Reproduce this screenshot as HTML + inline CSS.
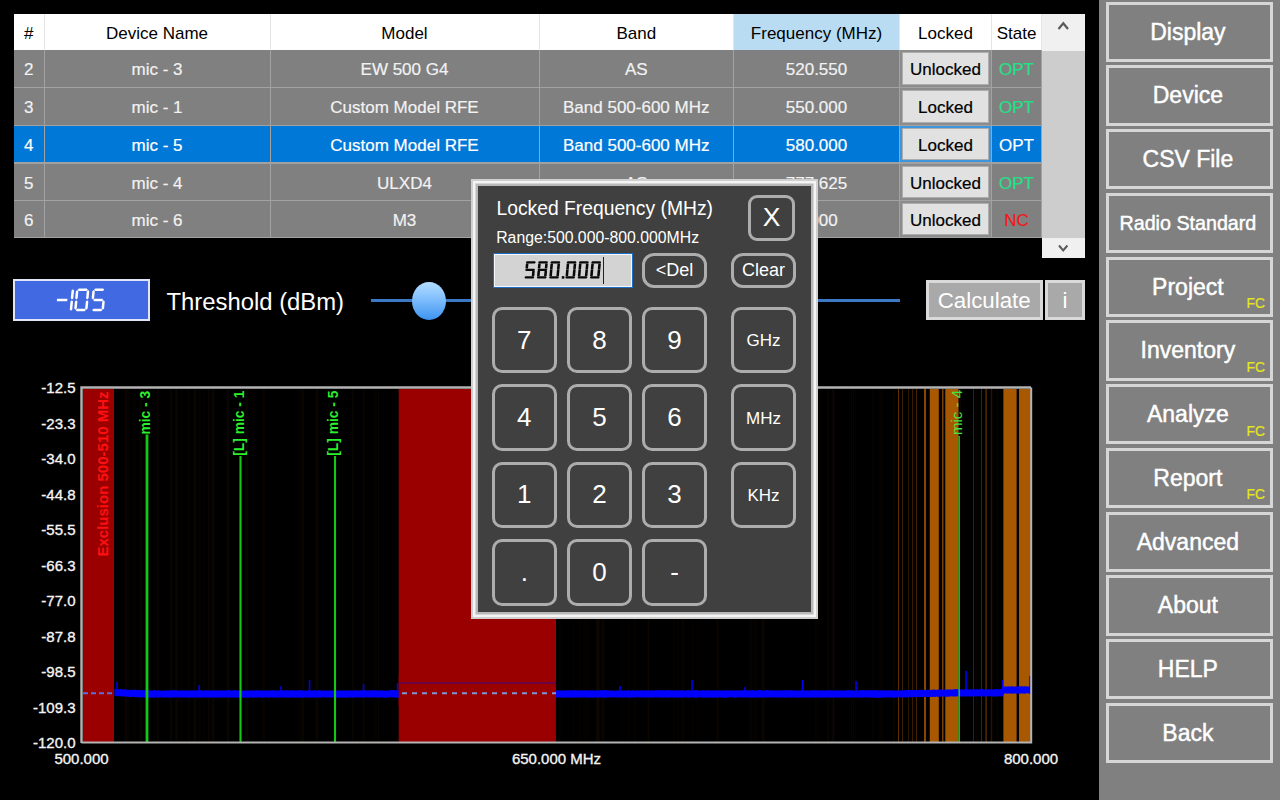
<!DOCTYPE html>
<html><head><meta charset="utf-8"><title>RF</title>
<style>
*{box-sizing:border-box;margin:0;padding:0}
html,body{width:1280px;height:800px;overflow:hidden;background:#000;font-family:"Liberation Sans",sans-serif}
#root{position:relative;width:1280px;height:800px;background:#000;overflow:hidden}
#tbl{position:absolute;left:14px;top:14px;width:1028px;height:224px;background:#a0a0a0;font-size:17px}
.hc{position:absolute;top:0;height:36.3px;line-height:40.5px;text-align:center;background:#fff;color:#000;border-right:1px solid #e5e5e5;white-space:nowrap}
.hc.hsel{background:#b9dcf3}
.row{position:absolute;left:0;width:1028px}
.c{position:absolute;top:0;height:100%;background:#808080;color:#f2f2f2;text-align:center;-webkit-text-stroke:0.2px;line-height:40.5px;border-right:1px solid #a2a2a2;border-bottom:1px solid #a2a2a2;white-space:nowrap;overflow:hidden}
.row.sel .c{background:#0078d7;color:#fff}
.c.opt{color:#1fe286} .c.nc{color:#f01818}
.row.sel .c.opt{color:#fff}
.c.lockc{background:#8c8c8c}
.row.sel .c.lockc{background:#3f94dc}
.lbtn{position:absolute;left:2px;top:2px;right:2px;bottom:2px;background:#e1e1e1;border:1px solid #adadad;color:#000;line-height:33px}
#sbar{position:absolute;left:1042px;top:14px;width:43px;height:244px;background:#f0f0f0}
#sthumb{position:absolute;left:0;top:36.5px;width:43px;height:187px;background:#cdcdcd}
#side{position:absolute;left:1098.5px;top:0;width:182px;height:800px;background:#808080}
.sbtn{-webkit-text-stroke:0.45px #fff;position:absolute;left:7.8px;width:167.2px;padding-right:4px;height:60.3px;border:3px solid #d6d6d6;color:#fff;font-size:23px;text-align:center;line-height:55px;white-space:nowrap}
.sbtn.small{font-size:19.7px}
.fc{-webkit-text-stroke:0.2px #e6e61a;position:absolute;right:5.5px;bottom:3px;font-size:13.8px;color:#e6e61a;line-height:1}
#thr{position:absolute;left:13px;top:279px;width:136.5px;height:41.5px;background:#4169e1;border:2px solid #dfe6f7}
#thrl{position:absolute;left:166.5px;top:287.6px;color:#fff;font-size:23.85px;line-height:28px;white-space:nowrap}
#sline{position:absolute;left:371px;top:299.2px;width:529px;height:2.4px;background:#3b79c4}
#sknob{position:absolute;left:411.8px;top:281.8px;width:34.4px;height:38.6px;border-radius:50%;background:linear-gradient(#b4dcff 0%,#8cc6ff 35%,#3d94f0 100%)}
.gbtn{position:absolute;top:280.3px;height:39.6px;background:#a9a9a9;border:3px solid #d9d9d9;color:#fff;font-size:22.3px;text-align:center;line-height:36.5px}
#dlg{position:absolute;left:470.5px;top:179px;width:347.6px;height:440.2px;background:#404040;border:2px solid #cfcfcf;box-shadow:inset 0 0 0 2.5px #f4f4f4, inset 0 0 0 5px #b9b9b9}
.kb{position:absolute;border:3px solid #adadad;border-radius:10px;color:#fff;font-size:26px;text-align:center;display:flex;align-items:center;justify-content:center;background:#404040}
.kb.unit{font-size:17px;padding-top:2.5px}
.kb.xb{font-size:26.5px;border-radius:9px}
.kb.sm{font-size:18px;border-radius:12px}
#dt{position:absolute;left:496.5px;top:197.3px;color:#fff;font-size:19.3px;line-height:24px;white-space:nowrap}
#dr{position:absolute;left:496.2px;top:227.6px;color:#fff;font-size:15.8px;line-height:20px;white-space:nowrap}
#inp{position:absolute;left:492.8px;top:253px;width:140.6px;height:35px;background:#d3d3d3;border:1.5px solid #1c6fc2;box-shadow:inset 0 0 0 1px #f4f8fc}
#caret{position:absolute;left:602.5px;top:256.5px;width:1.3px;height:27px;background:#222}
.gl{font:bold 13.8px "Liberation Sans",sans-serif;fill:#2cf02c}
.gl2{font:15px "Liberation Sans",sans-serif;fill:#3fe83f}
.rl{font:bold 15px "Liberation Sans",sans-serif;fill:#ff1010}
.yl{font:15px "Liberation Sans",sans-serif;fill:#f4f4f4;stroke:#f4f4f4;stroke-width:0.35px}
</style></head><body><div id="root">
<svg id="chart" width="1098" height="800" viewBox="0 0 1098 800" style="position:absolute;left:0;top:0">
<rect x="411.0" y="389" width="1" height="353" fill="rgba(150,80,0,0.027)"/>
<rect x="180.4" y="389" width="2" height="353" fill="rgba(150,80,0,0.044)"/>
<rect x="648.4" y="389" width="1" height="353" fill="rgba(150,80,0,0.061)"/>
<rect x="148.4" y="389" width="1" height="353" fill="rgba(150,80,0,0.040)"/>
<rect x="334.7" y="389" width="1" height="353" fill="rgba(150,80,0,0.045)"/>
<rect x="872.2" y="389" width="1" height="353" fill="rgba(150,80,0,0.026)"/>
<rect x="692.3" y="389" width="1" height="353" fill="rgba(150,80,0,0.046)"/>
<rect x="643.2" y="389" width="1" height="353" fill="rgba(150,80,0,0.038)"/>
<rect x="156.7" y="389" width="2" height="353" fill="rgba(150,80,0,0.059)"/>
<rect x="498.4" y="389" width="2" height="353" fill="rgba(150,80,0,0.044)"/>
<rect x="627.8" y="389" width="1" height="353" fill="rgba(150,80,0,0.051)"/>
<rect x="647.3" y="389" width="2" height="353" fill="rgba(150,80,0,0.049)"/>
<rect x="203.3" y="389" width="1" height="353" fill="rgba(150,80,0,0.052)"/>
<rect x="681.6" y="389" width="3" height="353" fill="rgba(150,80,0,0.042)"/>
<rect x="826.7" y="389" width="3" height="353" fill="rgba(150,80,0,0.041)"/>
<rect x="445.6" y="389" width="1" height="353" fill="rgba(150,80,0,0.031)"/>
<rect x="755.0" y="389" width="2" height="353" fill="rgba(150,80,0,0.031)"/>
<rect x="595.6" y="389" width="3" height="353" fill="rgba(150,80,0,0.059)"/>
<rect x="378.0" y="389" width="1" height="353" fill="rgba(150,80,0,0.064)"/>
<rect x="583.4" y="389" width="2" height="353" fill="rgba(150,80,0,0.027)"/>
<rect x="253.4" y="389" width="1" height="353" fill="rgba(150,80,0,0.042)"/>
<rect x="996.2" y="389" width="2" height="353" fill="rgba(150,80,0,0.023)"/>
<rect x="425.9" y="389" width="3" height="353" fill="rgba(150,80,0,0.036)"/>
<rect x="645.8" y="389" width="1" height="353" fill="rgba(150,80,0,0.041)"/>
<rect x="980.3" y="389" width="1" height="353" fill="rgba(150,80,0,0.041)"/>
<rect x="169.6" y="389" width="3" height="353" fill="rgba(150,80,0,0.052)"/>
<rect x="375.0" y="389" width="2" height="353" fill="rgba(150,80,0,0.037)"/>
<rect x="134.7" y="389" width="1" height="353" fill="rgba(150,80,0,0.041)"/>
<rect x="674.2" y="389" width="1" height="353" fill="rgba(150,80,0,0.042)"/>
<rect x="818.5" y="389" width="1" height="353" fill="rgba(150,80,0,0.026)"/>
<rect x="478.9" y="389" width="3" height="353" fill="rgba(150,80,0,0.061)"/>
<rect x="187.9" y="389" width="2" height="353" fill="rgba(150,80,0,0.040)"/>
<rect x="924.1" y="389" width="2" height="353" fill="rgba(150,80,0,0.057)"/>
<rect x="761.8" y="389" width="3" height="353" fill="rgba(150,80,0,0.064)"/>
<rect x="992.2" y="389" width="1" height="353" fill="rgba(150,80,0,0.027)"/>
<rect x="252.7" y="389" width="1" height="353" fill="rgba(150,80,0,0.050)"/>
<rect x="558.7" y="389" width="2" height="353" fill="rgba(150,80,0,0.047)"/>
<rect x="372.5" y="389" width="2" height="353" fill="rgba(150,80,0,0.027)"/>
<rect x="673.2" y="389" width="1" height="353" fill="rgba(150,80,0,0.034)"/>
<rect x="747.2" y="389" width="1" height="353" fill="rgba(150,80,0,0.043)"/>
<rect x="532.7" y="389" width="3" height="353" fill="rgba(150,80,0,0.059)"/>
<rect x="479.0" y="389" width="3" height="353" fill="rgba(150,80,0,0.038)"/>
<rect x="695.6" y="389" width="1" height="353" fill="rgba(150,80,0,0.023)"/>
<rect x="1016.9" y="389" width="1" height="353" fill="rgba(150,80,0,0.040)"/>
<rect x="425.8" y="389" width="1" height="353" fill="rgba(150,80,0,0.022)"/>
<rect x="633.7" y="389" width="2" height="353" fill="rgba(150,80,0,0.044)"/>
<rect x="676.8" y="389" width="1" height="353" fill="rgba(150,80,0,0.023)"/>
<rect x="677.1" y="389" width="2" height="353" fill="rgba(150,80,0,0.027)"/>
<rect x="990.2" y="389" width="3" height="353" fill="rgba(150,80,0,0.047)"/>
<rect x="226.6" y="389" width="3" height="353" fill="rgba(150,80,0,0.058)"/>
<rect x="554.5" y="389" width="1" height="353" fill="rgba(150,80,0,0.034)"/>
<rect x="207.7" y="389" width="2" height="353" fill="rgba(150,80,0,0.035)"/>
<rect x="552.9" y="389" width="1" height="353" fill="rgba(150,80,0,0.051)"/>
<rect x="302.2" y="389" width="2" height="353" fill="rgba(150,80,0,0.063)"/>
<rect x="248.4" y="389" width="1" height="353" fill="rgba(150,80,0,0.044)"/>
<rect x="809.2" y="389" width="1" height="353" fill="rgba(150,80,0,0.033)"/>
<rect x="752.4" y="389" width="2" height="353" fill="rgba(150,80,0,0.032)"/>
<rect x="946.9" y="389" width="1" height="353" fill="rgba(150,80,0,0.036)"/>
<rect x="602.4" y="389" width="2" height="353" fill="rgba(150,80,0,0.055)"/>
<rect x="697.6" y="389" width="1" height="353" fill="rgba(150,80,0,0.048)"/>
<rect x="853.2" y="389" width="1" height="353" fill="rgba(150,80,0,0.057)"/>
<rect x="297.3" y="389" width="1" height="353" fill="rgba(150,80,0,0.042)"/>
<rect x="1021.5" y="389" width="3" height="353" fill="rgba(150,80,0,0.056)"/>
<rect x="351.7" y="389" width="2" height="353" fill="rgba(150,80,0,0.051)"/>
<rect x="524.1" y="389" width="2" height="353" fill="rgba(150,80,0,0.062)"/>
<rect x="989.7" y="389" width="1" height="353" fill="rgba(150,80,0,0.036)"/>
<rect x="207.7" y="389" width="2" height="353" fill="rgba(150,80,0,0.041)"/>
<rect x="301.4" y="389" width="1" height="353" fill="rgba(150,80,0,0.048)"/>
<rect x="553.7" y="389" width="1" height="353" fill="rgba(150,80,0,0.049)"/>
<rect x="879.4" y="389" width="3" height="353" fill="rgba(150,80,0,0.025)"/>
<rect x="831.4" y="389" width="3" height="353" fill="rgba(150,80,0,0.054)"/>
<rect x="929.2" y="389" width="2" height="353" fill="rgba(150,80,0,0.040)"/>
<rect x="193.5" y="389" width="3" height="353" fill="rgba(150,80,0,0.063)"/>
<rect x="538.7" y="389" width="1" height="353" fill="rgba(150,80,0,0.053)"/>
<rect x="778.6" y="389" width="1" height="353" fill="rgba(150,80,0,0.028)"/>
<rect x="139.3" y="389" width="3" height="353" fill="rgba(150,80,0,0.047)"/>
<rect x="853.6" y="389" width="3" height="353" fill="rgba(150,80,0,0.027)"/>
<rect x="716.7" y="389" width="1" height="353" fill="rgba(150,80,0,0.036)"/>
<rect x="133.6" y="389" width="1" height="353" fill="rgba(150,80,0,0.056)"/>
<rect x="596.9" y="389" width="3" height="353" fill="rgba(150,80,0,0.062)"/>
<rect x="1018.7" y="389" width="1" height="353" fill="rgba(150,80,0,0.029)"/>
<rect x="139.7" y="389" width="1" height="353" fill="rgba(150,80,0,0.030)"/>
<rect x="814.3" y="389" width="3" height="353" fill="rgba(150,80,0,0.035)"/>
<rect x="879.0" y="389" width="2" height="353" fill="rgba(150,80,0,0.023)"/>
<rect x="937.2" y="389" width="3" height="353" fill="rgba(150,80,0,0.050)"/>
<rect x="872.5" y="389" width="1" height="353" fill="rgba(150,80,0,0.060)"/>
<rect x="601.7" y="389" width="1" height="353" fill="rgba(150,80,0,0.044)"/>
<rect x="914.4" y="389" width="1" height="353" fill="rgba(150,80,0,0.055)"/>
<rect x="825.6" y="389" width="1" height="353" fill="rgba(150,80,0,0.027)"/>
<rect x="548.2" y="389" width="1" height="353" fill="rgba(150,80,0,0.053)"/>
<rect x="412.9" y="389" width="3" height="353" fill="rgba(150,80,0,0.043)"/>
<rect x="833.2" y="389" width="1" height="353" fill="rgba(150,80,0,0.025)"/>
<rect x="341.9" y="389" width="1" height="353" fill="rgba(150,80,0,0.032)"/>
<rect x="579.6" y="389" width="1" height="353" fill="rgba(150,80,0,0.045)"/>
<rect x="520.5" y="389" width="1" height="353" fill="rgba(150,80,0,0.048)"/>
<rect x="749.2" y="389" width="3" height="353" fill="rgba(150,80,0,0.040)"/>
<rect x="579.6" y="389" width="2" height="353" fill="rgba(150,80,0,0.031)"/>
<rect x="960.2" y="389" width="1" height="353" fill="rgba(150,80,0,0.060)"/>
<rect x="884.3" y="389" width="1" height="353" fill="rgba(150,80,0,0.026)"/>
<rect x="473.8" y="389" width="1" height="353" fill="rgba(150,80,0,0.034)"/>
<rect x="506.8" y="389" width="2" height="353" fill="rgba(150,80,0,0.030)"/>
<rect x="832.9" y="389" width="1" height="353" fill="rgba(150,80,0,0.060)"/>
<rect x="975.5" y="389" width="2" height="353" fill="rgba(150,80,0,0.049)"/>
<rect x="245.1" y="389" width="3" height="353" fill="rgba(150,80,0,0.060)"/>
<rect x="315.4" y="389" width="3" height="353" fill="rgba(150,80,0,0.063)"/>
<rect x="925.5" y="389" width="1" height="353" fill="rgba(150,80,0,0.027)"/>
<rect x="262.1" y="389" width="3" height="353" fill="rgba(150,80,0,0.039)"/>
<rect x="425.0" y="389" width="2" height="353" fill="rgba(150,80,0,0.029)"/>
<rect x="198.5" y="389" width="2" height="353" fill="rgba(150,80,0,0.036)"/>
<rect x="622.1" y="389" width="1" height="353" fill="rgba(150,80,0,0.040)"/>
<rect x="466.4" y="389" width="2" height="353" fill="rgba(150,80,0,0.043)"/>
<rect x="583.7" y="389" width="1" height="353" fill="rgba(150,80,0,0.023)"/>
<rect x="1005.0" y="389" width="2" height="353" fill="rgba(150,80,0,0.025)"/>
<rect x="363.4" y="389" width="1" height="353" fill="rgba(150,80,0,0.061)"/>
<rect x="362.0" y="389" width="3" height="353" fill="rgba(150,80,0,0.026)"/>
<rect x="893.1" y="389" width="2" height="353" fill="rgba(150,80,0,0.050)"/>
<rect x="486.3" y="389" width="3" height="353" fill="rgba(150,80,0,0.044)"/>
<rect x="756.3" y="389" width="1" height="353" fill="rgba(150,80,0,0.024)"/>
<rect x="847.2" y="389" width="1" height="353" fill="rgba(150,80,0,0.028)"/>
<rect x="360.6" y="389" width="1" height="353" fill="rgba(150,80,0,0.021)"/>
<rect x="849.1" y="389" width="1" height="353" fill="rgba(150,80,0,0.024)"/>
<rect x="175.1" y="389" width="3" height="353" fill="rgba(150,80,0,0.059)"/>
<rect x="124.6" y="389" width="3" height="353" fill="rgba(150,80,0,0.065)"/>
<rect x="963.8" y="389" width="1" height="353" fill="rgba(150,80,0,0.032)"/>
<rect x="153.6" y="389" width="1" height="353" fill="rgba(150,80,0,0.052)"/>
<rect x="1002.8" y="389" width="1" height="353" fill="rgba(150,80,0,0.032)"/>
<rect x="299.0" y="389" width="2" height="353" fill="rgba(150,80,0,0.034)"/>
<rect x="601.0" y="389" width="3" height="353" fill="rgba(150,80,0,0.029)"/>
<rect x="572.6" y="389" width="2" height="353" fill="rgba(150,80,0,0.028)"/>
<rect x="851.0" y="389" width="1" height="353" fill="rgba(150,80,0,0.065)"/>
<rect x="128.1" y="389" width="1" height="353" fill="rgba(150,80,0,0.053)"/>
<rect x="585.6" y="389" width="3" height="353" fill="rgba(150,80,0,0.031)"/>
<rect x="211.5" y="389" width="3" height="353" fill="rgba(150,80,0,0.057)"/>
<rect x="716.0" y="389" width="3" height="353" fill="rgba(150,80,0,0.045)"/>
<rect x="1003.8" y="389" width="1" height="353" fill="rgba(150,80,0,0.034)"/>
<rect x="1014.9" y="389" width="1" height="353" fill="rgba(150,80,0,0.035)"/>
<rect x="485.1" y="389" width="1" height="353" fill="rgba(150,80,0,0.036)"/>
<rect x="881.5" y="389" width="2" height="353" fill="rgba(150,80,0,0.021)"/>
<rect x="509.0" y="389" width="3" height="353" fill="rgba(150,80,0,0.022)"/>
<rect x="912.3" y="389" width="2" height="353" fill="rgba(150,80,0,0.050)"/>
<rect x="83" y="389" width="31" height="353" fill="#9b0000"/>
<rect x="398.7" y="389" width="157.3" height="353" fill="#9b0000"/>
<rect x="898" y="389" width="1" height="353" fill="#a85800" opacity="0.55"/>
<rect x="902" y="389" width="1" height="353" fill="#a85800" opacity="0.35"/>
<rect x="908" y="389" width="1" height="353" fill="#a85800" opacity="0.25"/>
<rect x="912" y="389" width="1" height="353" fill="#a85800" opacity="0.3"/>
<rect x="916" y="389" width="1" height="353" fill="#a85800" opacity="0.4"/>
<rect x="924" y="389" width="2" height="353" fill="#a85800" opacity="0.8"/>
<rect x="929.8" y="389" width="9" height="353" fill="#a85800" opacity="1"/>
<rect x="942" y="389" width="1.5" height="353" fill="#a85800" opacity="0.7"/>
<rect x="945.3" y="389" width="13.2" height="353" fill="#a85800" opacity="1"/>
<rect x="973" y="389" width="1" height="353" fill="#a85800" opacity="0.35"/>
<rect x="981" y="389" width="1" height="353" fill="#a85800" opacity="0.4"/>
<rect x="985.5" y="389" width="1.2" height="353" fill="#a85800" opacity="0.6"/>
<rect x="991" y="389" width="1" height="353" fill="#a85800" opacity="0.2"/>
<rect x="1003.4" y="389" width="13.2" height="353" fill="#a85800" opacity="1"/>
<rect x="1019" y="389" width="12" height="353" fill="#a85800" opacity="1"/>
<path d="M114.5,688.9 L116.0,689.3 L117.5,689.2 L119.0,689.2 L120.5,688.9 L122.0,689.6 L123.5,689.5 L125.0,689.5 L126.5,689.6 L128.0,689.7 L129.5,689.9 L131.0,689.9 L132.5,689.8 L134.0,689.8 L135.5,689.6 L137.0,690.2 L138.5,689.9 L140.0,690.0 L141.5,690.2 L143.0,690.2 L144.5,690.1 L146.0,690.4 L147.5,690.3 L149.0,690.2 L150.5,690.4 L152.0,690.7 L153.5,690.2 L155.0,690.1 L156.5,690.6 L158.0,690.3 L159.5,690.5 L161.0,690.7 L162.5,690.4 L164.0,690.5 L165.5,690.7 L167.0,690.2 L168.5,690.4 L170.0,690.4 L171.5,690.2 L173.0,690.2 L174.5,690.3 L176.0,690.2 L177.5,690.2 L179.0,690.7 L180.5,690.6 L182.0,690.5 L183.5,690.3 L185.0,690.6 L186.5,690.4 L188.0,690.6 L189.5,690.4 L191.0,690.5 L192.5,690.2 L194.0,690.4 L195.5,690.6 L197.0,690.5 L198.5,690.4 L200.0,690.1 L201.5,690.2 L203.0,690.7 L204.5,690.3 L206.0,690.5 L207.5,690.3 L209.0,690.6 L210.5,690.4 L212.0,690.5 L213.5,690.1 L215.0,690.5 L216.5,690.5 L218.0,690.6 L219.5,690.5 L221.0,690.5 L222.5,690.6 L224.0,690.3 L225.5,690.7 L227.0,690.2 L228.5,690.1 L230.0,690.2 L231.5,690.7 L233.0,690.3 L234.5,690.1 L236.0,690.5 L237.5,690.2 L239.0,690.7 L240.5,690.5 L242.0,690.4 L243.5,690.7 L245.0,690.5 L246.5,690.6 L248.0,690.4 L249.5,690.4 L251.0,690.5 L252.5,690.5 L254.0,690.3 L255.5,690.6 L257.0,690.3 L258.5,690.3 L260.0,690.4 L261.5,690.4 L263.0,690.5 L264.5,690.4 L266.0,690.6 L267.5,690.4 L269.0,690.5 L270.5,690.6 L272.0,690.2 L273.5,690.3 L275.0,690.5 L276.5,690.4 L278.0,690.5 L279.5,690.4 L281.0,690.2 L282.5,690.2 L284.0,690.3 L285.5,690.5 L287.0,690.1 L288.5,690.4 L290.0,690.2 L291.5,690.4 L293.0,690.1 L294.5,690.4 L296.0,690.4 L297.5,690.6 L299.0,690.1 L300.5,690.2 L302.0,690.2 L303.5,690.6 L305.0,690.7 L306.5,690.4 L308.0,690.3 L309.5,690.3 L311.0,690.4 L312.5,690.6 L314.0,690.1 L315.5,690.5 L317.0,690.7 L318.5,690.1 L320.0,690.5 L321.5,690.6 L323.0,690.4 L324.5,690.5 L326.0,690.7 L327.5,690.2 L329.0,690.7 L330.5,690.4 L332.0,690.4 L333.5,690.3 L335.0,690.5 L336.5,690.5 L338.0,690.7 L339.5,690.6 L341.0,690.6 L342.5,690.5 L344.0,690.6 L345.5,690.3 L347.0,690.4 L348.5,690.7 L350.0,690.1 L351.5,690.7 L353.0,690.5 L354.5,690.6 L356.0,690.3 L357.5,690.6 L359.0,690.6 L360.5,690.3 L362.0,690.4 L363.5,690.3 L365.0,690.1 L366.5,690.6 L368.0,690.7 L369.5,690.2 L371.0,690.2 L372.5,690.2 L374.0,690.2 L375.5,690.3 L377.0,690.4 L378.5,690.5 L380.0,690.4 L381.5,690.6 L383.0,690.5 L384.5,690.4 L386.0,690.7 L387.5,690.7 L389.0,690.5 L390.5,690.1 L392.0,690.3 L393.5,690.1 L395.0,690.3 L396.5,690.2 L398.0,690.7 L399.5,690.6 L401.0,690.4 L402.5,690.2 L404.0,690.2 L405.5,690.4 L407.0,690.1 L408.5,690.3 L410.0,690.6 L411.5,690.4 L413.0,690.3 L414.5,690.5 L416.0,690.5 L417.5,690.4 L419.0,690.6 L420.5,690.6 L422.0,690.3 L423.5,690.4 L425.0,690.1 L426.5,690.6 L428.0,690.2 L429.5,690.4 L431.0,690.2 L432.5,690.5 L434.0,690.5 L435.5,690.5 L437.0,690.6 L438.5,690.5 L440.0,690.6 L441.5,690.5 L443.0,690.4 L444.5,690.6 L446.0,690.7 L447.5,690.2 L449.0,690.4 L450.5,690.2 L452.0,690.7 L453.5,690.2 L455.0,690.7 L456.5,690.6 L458.0,690.2 L459.5,690.7 L461.0,690.3 L462.5,690.7 L464.0,690.7 L465.5,690.7 L467.0,690.2 L468.5,690.2 L470.0,690.5 L471.5,690.7 L473.0,690.4 L474.5,690.5 L476.0,690.3 L477.5,690.4 L479.0,690.5 L480.5,690.1 L482.0,690.4 L483.5,690.3 L485.0,690.5 L486.5,690.2 L488.0,690.3 L489.5,690.5 L491.0,690.4 L492.5,690.6 L494.0,690.4 L495.5,690.2 L497.0,690.7 L498.5,690.2 L500.0,690.4 L501.5,690.3 L503.0,690.5 L504.5,690.6 L506.0,690.5 L507.5,690.2 L509.0,690.5 L510.5,690.7 L512.0,690.5 L513.5,690.3 L515.0,690.3 L516.5,690.2 L518.0,690.2 L519.5,690.3 L521.0,690.4 L522.5,690.7 L524.0,690.6 L525.5,690.6 L527.0,690.2 L528.5,690.2 L530.0,690.3 L531.5,690.5 L533.0,690.4 L534.5,690.2 L536.0,690.5 L537.5,690.5 L539.0,690.4 L540.5,690.7 L542.0,690.4 L543.5,690.3 L545.0,690.2 L546.5,690.5 L548.0,690.5 L549.5,690.2 L551.0,690.3 L552.5,690.6 L554.0,690.5 L555.5,690.7 L557.0,690.2 L558.5,690.2 L560.0,690.7 L561.5,690.3 L563.0,690.6 L564.5,690.5 L566.0,690.2 L567.5,690.3 L569.0,690.2 L570.5,690.5 L572.0,690.3 L573.5,690.4 L575.0,690.1 L576.5,690.3 L578.0,690.6 L579.5,690.6 L581.0,690.3 L582.5,690.5 L584.0,690.2 L585.5,690.2 L587.0,690.2 L588.5,690.4 L590.0,690.3 L591.5,690.5 L593.0,690.2 L594.5,690.5 L596.0,690.5 L597.5,690.5 L599.0,690.6 L600.5,690.1 L602.0,690.4 L603.5,690.1 L605.0,690.1 L606.5,690.3 L608.0,690.6 L609.5,690.3 L611.0,690.5 L612.5,690.4 L614.0,690.7 L615.5,690.4 L617.0,690.4 L618.5,690.5 L620.0,690.6 L621.5,690.2 L623.0,690.7 L624.5,690.3 L626.0,690.7 L627.5,690.3 L629.0,690.2 L630.5,690.7 L632.0,690.2 L633.5,690.4 L635.0,690.4 L636.5,690.6 L638.0,690.7 L639.5,690.6 L641.0,690.2 L642.5,690.3 L644.0,690.6 L645.5,690.4 L647.0,690.3 L648.5,690.3 L650.0,690.7 L651.5,690.1 L653.0,690.4 L654.5,690.5 L656.0,690.2 L657.5,690.3 L659.0,690.1 L660.5,690.3 L662.0,690.2 L663.5,690.1 L665.0,690.7 L666.5,690.3 L668.0,690.1 L669.5,690.5 L671.0,690.2 L672.5,690.4 L674.0,690.2 L675.5,690.6 L677.0,690.2 L678.5,690.5 L680.0,690.5 L681.5,690.1 L683.0,690.2 L684.5,690.4 L686.0,690.7 L687.5,690.1 L689.0,690.2 L690.5,690.5 L692.0,690.4 L693.5,690.7 L695.0,690.3 L696.5,690.1 L698.0,690.7 L699.5,690.3 L701.0,690.7 L702.5,690.2 L704.0,690.6 L705.5,690.4 L707.0,690.2 L708.5,690.3 L710.0,690.6 L711.5,690.7 L713.0,690.2 L714.5,690.6 L716.0,690.3 L717.5,690.6 L719.0,690.3 L720.5,690.5 L722.0,690.5 L723.5,690.7 L725.0,690.2 L726.5,690.3 L728.0,690.5 L729.5,690.2 L731.0,690.4 L732.5,690.4 L734.0,690.4 L735.5,690.2 L737.0,690.5 L738.5,690.4 L740.0,690.2 L741.5,690.5 L743.0,690.3 L744.5,690.1 L746.0,690.1 L747.5,690.4 L749.0,690.2 L750.5,690.6 L752.0,690.1 L753.5,690.4 L755.0,690.4 L756.5,690.5 L758.0,690.1 L759.5,690.3 L761.0,690.3 L762.5,690.5 L764.0,690.4 L765.5,690.1 L767.0,690.1 L768.5,690.3 L770.0,690.3 L771.5,690.4 L773.0,690.2 L774.5,690.4 L776.0,690.4 L777.5,690.5 L779.0,690.5 L780.5,690.3 L782.0,690.5 L783.5,690.2 L785.0,690.3 L786.5,690.3 L788.0,690.5 L789.5,690.1 L791.0,690.1 L792.5,690.6 L794.0,690.6 L795.5,690.6 L797.0,690.5 L798.5,690.6 L800.0,690.5 L801.5,690.4 L803.0,690.2 L804.5,690.6 L806.0,690.5 L807.5,690.5 L809.0,690.7 L810.5,690.2 L812.0,690.3 L813.5,690.2 L815.0,690.3 L816.5,690.3 L818.0,690.6 L819.5,690.6 L821.0,690.5 L822.5,690.2 L824.0,690.5 L825.5,690.6 L827.0,690.4 L828.5,690.2 L830.0,690.3 L831.5,690.2 L833.0,690.7 L834.5,690.2 L836.0,690.5 L837.5,690.3 L839.0,690.6 L840.5,690.2 L842.0,690.6 L843.5,690.7 L845.0,690.5 L846.5,690.3 L848.0,690.1 L849.5,690.4 L851.0,690.3 L852.5,690.3 L854.0,690.5 L855.5,690.7 L857.0,690.3 L858.5,690.4 L860.0,690.5 L861.5,690.1 L863.0,690.1 L864.5,690.4 L866.0,690.1 L867.5,690.2 L869.0,690.3 L870.5,690.2 L872.0,690.3 L873.5,690.2 L875.0,690.1 L876.5,690.3 L878.0,690.4 L879.5,690.6 L881.0,690.3 L882.5,690.3 L884.0,690.2 L885.5,690.5 L887.0,690.5 L888.5,690.3 L890.0,690.2 L891.5,690.5 L893.0,690.6 L894.5,690.5 L896.0,690.4 L897.5,690.3 L899.0,690.5 L900.5,690.5 L902.0,690.3 L903.5,690.5 L905.0,690.1 L906.5,690.3 L908.0,690.1 L909.5,689.9 L911.0,689.9 L912.5,690.0 L914.0,690.1 L915.5,690.3 L917.0,689.9 L918.5,690.2 L920.0,689.8 L921.5,689.9 L923.0,689.7 L924.5,690.0 L926.0,689.8 L927.5,690.0 L929.0,689.7 L930.5,689.9 L932.0,689.8 L933.5,689.6 L935.0,689.8 L936.5,689.9 L938.0,689.5 L939.5,689.4 L941.0,689.6 L942.5,689.7 L944.0,689.6 L945.5,689.7 L947.0,689.5 L948.5,689.4 L950.0,689.5 L951.5,689.5 L953.0,689.5 L954.5,689.3 L956.0,689.0 L957.5,689.3 L959.0,689.2 L960.5,689.4 L962.0,689.4 L963.5,689.4 L965.0,689.3 L966.5,689.3 L968.0,689.3 L969.5,689.5 L971.0,689.2 L972.5,689.5 L974.0,689.2 L975.5,689.4 L977.0,689.1 L978.5,689.5 L980.0,689.1 L981.5,689.4 L983.0,689.0 L984.5,689.4 L986.0,689.5 L987.5,689.4 L989.0,689.1 L990.5,689.4 L992.0,689.5 L993.5,689.2 L995.0,689.2 L996.5,689.0 L998.0,689.2 L999.5,689.3 L1001.0,689.1 L1002.5,688.9 L1004.0,686.6 L1005.5,686.4 L1007.0,686.4 L1008.5,686.3 L1010.0,686.7 L1011.5,686.1 L1013.0,686.6 L1014.5,686.4 L1016.0,686.4 L1017.5,686.3 L1019.0,686.5 L1020.5,686.3 L1022.0,686.2 L1023.5,686.4 L1025.0,686.3 L1026.5,686.2 L1028.0,686.7 L1029.5,686.2 L1031.0,686.3 L1031.0,693.5 L1029.5,693.6 L1028.0,693.3 L1026.5,693.3 L1025.0,693.7 L1023.5,693.5 L1022.0,693.4 L1020.5,693.4 L1019.0,693.7 L1017.5,693.8 L1016.0,693.5 L1014.5,693.4 L1013.0,693.4 L1011.5,693.7 L1010.0,693.6 L1008.5,693.5 L1007.0,693.7 L1005.5,693.3 L1004.0,693.7 L1002.5,696.4 L1001.0,696.4 L999.5,696.1 L998.0,696.4 L996.5,696.5 L995.0,696.4 L993.5,696.6 L992.0,696.4 L990.5,696.1 L989.0,696.5 L987.5,696.3 L986.0,696.5 L984.5,696.6 L983.0,696.3 L981.5,696.4 L980.0,696.4 L978.5,696.1 L977.0,696.5 L975.5,696.4 L974.0,696.3 L972.5,696.4 L971.0,696.5 L969.5,696.5 L968.0,696.2 L966.5,696.4 L965.0,696.4 L963.5,696.6 L962.0,696.6 L960.5,696.5 L959.0,696.2 L957.5,696.2 L956.0,696.6 L954.5,696.4 L953.0,696.4 L951.5,696.3 L950.0,696.5 L948.5,696.8 L947.0,696.7 L945.5,696.7 L944.0,696.5 L942.5,696.5 L941.0,696.8 L939.5,696.5 L938.0,697.0 L936.5,696.6 L935.0,696.9 L933.5,696.7 L932.0,697.1 L930.5,696.9 L929.0,696.9 L927.5,696.9 L926.0,697.1 L924.5,696.9 L923.0,697.2 L921.5,697.1 L920.0,697.1 L918.5,697.1 L917.0,697.0 L915.5,697.4 L914.0,697.1 L912.5,697.2 L911.0,697.3 L909.5,697.1 L908.0,697.4 L906.5,697.4 L905.0,697.3 L903.5,697.4 L902.0,697.6 L900.5,697.5 L899.0,697.3 L897.5,697.6 L896.0,697.5 L894.5,697.8 L893.0,697.6 L891.5,697.5 L890.0,697.4 L888.5,697.3 L887.0,697.5 L885.5,697.6 L884.0,697.7 L882.5,697.5 L881.0,697.8 L879.5,697.7 L878.0,697.7 L876.5,697.7 L875.0,697.7 L873.5,697.5 L872.0,697.7 L870.5,697.4 L869.0,697.7 L867.5,697.4 L866.0,697.3 L864.5,697.4 L863.0,697.8 L861.5,697.8 L860.0,697.5 L858.5,697.4 L857.0,697.6 L855.5,697.8 L854.0,697.3 L852.5,697.4 L851.0,697.6 L849.5,697.8 L848.0,697.4 L846.5,697.5 L845.0,697.5 L843.5,697.7 L842.0,697.5 L840.5,697.5 L839.0,697.5 L837.5,697.8 L836.0,697.4 L834.5,697.4 L833.0,697.7 L831.5,697.5 L830.0,697.7 L828.5,697.6 L827.0,697.3 L825.5,697.7 L824.0,697.7 L822.5,697.4 L821.0,697.7 L819.5,697.5 L818.0,697.4 L816.5,697.6 L815.0,697.7 L813.5,697.6 L812.0,697.6 L810.5,697.7 L809.0,697.4 L807.5,697.7 L806.0,697.3 L804.5,697.8 L803.0,697.5 L801.5,697.3 L800.0,697.7 L798.5,697.8 L797.0,697.4 L795.5,697.5 L794.0,697.4 L792.5,697.6 L791.0,697.8 L789.5,697.4 L788.0,697.4 L786.5,697.6 L785.0,697.8 L783.5,697.6 L782.0,697.7 L780.5,697.6 L779.0,697.6 L777.5,697.4 L776.0,697.6 L774.5,697.5 L773.0,697.5 L771.5,697.6 L770.0,697.3 L768.5,697.6 L767.0,697.4 L765.5,697.6 L764.0,697.4 L762.5,697.5 L761.0,697.5 L759.5,697.5 L758.0,697.7 L756.5,697.3 L755.0,697.4 L753.5,697.8 L752.0,697.7 L750.5,697.4 L749.0,697.8 L747.5,697.4 L746.0,697.6 L744.5,697.6 L743.0,697.7 L741.5,697.3 L740.0,697.3 L738.5,697.4 L737.0,697.5 L735.5,697.6 L734.0,697.7 L732.5,697.3 L731.0,697.3 L729.5,697.3 L728.0,697.7 L726.5,697.5 L725.0,697.7 L723.5,697.7 L722.0,697.8 L720.5,697.4 L719.0,697.4 L717.5,697.7 L716.0,697.5 L714.5,697.7 L713.0,697.7 L711.5,697.8 L710.0,697.4 L708.5,697.5 L707.0,697.7 L705.5,697.6 L704.0,697.8 L702.5,697.7 L701.0,697.3 L699.5,697.3 L698.0,697.4 L696.5,697.7 L695.0,697.4 L693.5,697.4 L692.0,697.4 L690.5,697.6 L689.0,697.7 L687.5,697.4 L686.0,697.3 L684.5,697.6 L683.0,697.6 L681.5,697.8 L680.0,697.7 L678.5,697.6 L677.0,697.4 L675.5,697.4 L674.0,697.7 L672.5,697.4 L671.0,697.3 L669.5,697.8 L668.0,697.8 L666.5,697.6 L665.0,697.6 L663.5,697.4 L662.0,697.8 L660.5,697.4 L659.0,697.4 L657.5,697.4 L656.0,697.3 L654.5,697.5 L653.0,697.6 L651.5,697.7 L650.0,697.6 L648.5,697.6 L647.0,697.5 L645.5,697.6 L644.0,697.5 L642.5,697.6 L641.0,697.4 L639.5,697.4 L638.0,697.3 L636.5,697.3 L635.0,697.5 L633.5,697.6 L632.0,697.6 L630.5,697.7 L629.0,697.8 L627.5,697.4 L626.0,697.4 L624.5,697.5 L623.0,697.7 L621.5,697.4 L620.0,697.5 L618.5,697.5 L617.0,697.6 L615.5,697.5 L614.0,697.3 L612.5,697.6 L611.0,697.3 L609.5,697.5 L608.0,697.4 L606.5,697.7 L605.0,697.7 L603.5,697.7 L602.0,697.5 L600.5,697.4 L599.0,697.6 L597.5,697.3 L596.0,697.4 L594.5,697.5 L593.0,697.7 L591.5,697.6 L590.0,697.7 L588.5,697.6 L587.0,697.8 L585.5,697.3 L584.0,697.4 L582.5,697.5 L581.0,697.4 L579.5,697.5 L578.0,697.5 L576.5,697.6 L575.0,697.5 L573.5,697.4 L572.0,697.8 L570.5,697.5 L569.0,697.6 L567.5,697.4 L566.0,697.6 L564.5,697.7 L563.0,697.7 L561.5,697.4 L560.0,697.6 L558.5,697.3 L557.0,697.6 L555.5,697.7 L554.0,697.7 L552.5,697.8 L551.0,697.3 L549.5,697.6 L548.0,697.5 L546.5,697.3 L545.0,697.7 L543.5,697.7 L542.0,697.5 L540.5,697.8 L539.0,697.4 L537.5,697.5 L536.0,697.4 L534.5,697.6 L533.0,697.7 L531.5,697.5 L530.0,697.6 L528.5,697.7 L527.0,697.4 L525.5,697.8 L524.0,697.5 L522.5,697.8 L521.0,697.6 L519.5,697.4 L518.0,697.6 L516.5,697.6 L515.0,697.6 L513.5,697.3 L512.0,697.6 L510.5,697.8 L509.0,697.7 L507.5,697.7 L506.0,697.7 L504.5,697.3 L503.0,697.4 L501.5,697.4 L500.0,697.8 L498.5,697.5 L497.0,697.4 L495.5,697.4 L494.0,697.5 L492.5,697.3 L491.0,697.4 L489.5,697.8 L488.0,697.5 L486.5,697.7 L485.0,697.3 L483.5,697.7 L482.0,697.3 L480.5,697.6 L479.0,697.4 L477.5,697.6 L476.0,697.4 L474.5,697.7 L473.0,697.5 L471.5,697.3 L470.0,697.6 L468.5,697.5 L467.0,697.7 L465.5,697.7 L464.0,697.8 L462.5,697.5 L461.0,697.5 L459.5,697.6 L458.0,697.6 L456.5,697.6 L455.0,697.6 L453.5,697.4 L452.0,697.6 L450.5,697.4 L449.0,697.5 L447.5,697.4 L446.0,697.3 L444.5,697.5 L443.0,697.6 L441.5,697.4 L440.0,697.3 L438.5,697.8 L437.0,697.4 L435.5,697.5 L434.0,697.4 L432.5,697.4 L431.0,697.7 L429.5,697.7 L428.0,697.4 L426.5,697.5 L425.0,697.4 L423.5,697.8 L422.0,697.4 L420.5,697.3 L419.0,697.5 L417.5,697.6 L416.0,697.6 L414.5,697.4 L413.0,697.6 L411.5,697.7 L410.0,697.7 L408.5,697.4 L407.0,697.5 L405.5,697.3 L404.0,697.4 L402.5,697.8 L401.0,697.7 L399.5,697.7 L398.0,697.7 L396.5,697.8 L395.0,697.6 L393.5,697.4 L392.0,697.6 L390.5,697.3 L389.0,697.5 L387.5,697.6 L386.0,697.4 L384.5,697.7 L383.0,697.5 L381.5,697.6 L380.0,697.6 L378.5,697.7 L377.0,697.5 L375.5,697.4 L374.0,697.3 L372.5,697.5 L371.0,697.5 L369.5,697.6 L368.0,697.5 L366.5,697.3 L365.0,697.5 L363.5,697.7 L362.0,697.5 L360.5,697.6 L359.0,697.4 L357.5,697.3 L356.0,697.5 L354.5,697.5 L353.0,697.7 L351.5,697.6 L350.0,697.3 L348.5,697.6 L347.0,697.8 L345.5,697.7 L344.0,697.6 L342.5,697.7 L341.0,697.5 L339.5,697.7 L338.0,697.5 L336.5,697.7 L335.0,697.3 L333.5,697.5 L332.0,697.6 L330.5,697.5 L329.0,697.4 L327.5,697.6 L326.0,697.4 L324.5,697.6 L323.0,697.3 L321.5,697.6 L320.0,697.7 L318.5,697.4 L317.0,697.6 L315.5,697.7 L314.0,697.4 L312.5,697.5 L311.0,697.7 L309.5,697.6 L308.0,697.8 L306.5,697.3 L305.0,697.4 L303.5,697.7 L302.0,697.7 L300.5,697.7 L299.0,697.4 L297.5,697.4 L296.0,697.7 L294.5,697.5 L293.0,697.8 L291.5,697.3 L290.0,697.8 L288.5,697.7 L287.0,697.4 L285.5,697.7 L284.0,697.5 L282.5,697.5 L281.0,697.3 L279.5,697.7 L278.0,697.6 L276.5,697.6 L275.0,697.7 L273.5,697.4 L272.0,697.5 L270.5,697.3 L269.0,697.7 L267.5,697.5 L266.0,697.4 L264.5,697.6 L263.0,697.7 L261.5,697.5 L260.0,697.7 L258.5,697.3 L257.0,697.4 L255.5,697.5 L254.0,697.5 L252.5,697.7 L251.0,697.4 L249.5,697.4 L248.0,697.8 L246.5,697.7 L245.0,697.6 L243.5,697.8 L242.0,697.4 L240.5,697.7 L239.0,697.7 L237.5,697.5 L236.0,697.7 L234.5,697.5 L233.0,697.4 L231.5,697.6 L230.0,697.4 L228.5,697.7 L227.0,697.3 L225.5,697.5 L224.0,697.4 L222.5,697.3 L221.0,697.8 L219.5,697.5 L218.0,697.5 L216.5,697.5 L215.0,697.7 L213.5,697.6 L212.0,697.4 L210.5,697.7 L209.0,697.5 L207.5,697.4 L206.0,697.6 L204.5,697.4 L203.0,697.3 L201.5,697.8 L200.0,697.5 L198.5,697.8 L197.0,697.3 L195.5,697.5 L194.0,697.5 L192.5,697.8 L191.0,697.5 L189.5,697.7 L188.0,697.4 L186.5,697.8 L185.0,697.5 L183.5,697.6 L182.0,697.6 L180.5,697.6 L179.0,697.6 L177.5,697.4 L176.0,697.3 L174.5,697.5 L173.0,697.4 L171.5,697.4 L170.0,697.7 L168.5,697.7 L167.0,697.3 L165.5,697.8 L164.0,697.5 L162.5,697.4 L161.0,697.3 L159.5,697.5 L158.0,697.8 L156.5,697.3 L155.0,697.6 L153.5,697.7 L152.0,697.6 L150.5,697.7 L149.0,697.7 L147.5,697.6 L146.0,697.5 L144.5,697.6 L143.0,697.2 L141.5,697.2 L140.0,697.4 L138.5,697.2 L137.0,697.3 L135.5,697.2 L134.0,696.8 L132.5,696.8 L131.0,696.9 L129.5,696.9 L128.0,696.8 L126.5,696.7 L125.0,696.4 L123.5,696.3 L122.0,696.6 L120.5,696.3 L119.0,696.2 L117.5,696.0 L116.0,696.0 L114.5,696.2Z" fill="#0000ff"/>
<rect x="116.3" y="682" width="1.5" height="12" fill="#0000ff"/>
<rect x="198.3" y="685" width="1.5" height="9" fill="#0000ff"/>
<rect x="280.3" y="686" width="1.5" height="8" fill="#0000ff"/>
<rect x="308.8" y="680" width="1.5" height="14" fill="#0000ff"/>
<rect x="362.8" y="684" width="1.5" height="10" fill="#0000ff"/>
<rect x="396.8" y="683" width="1.5" height="11" fill="#0000ff"/>
<rect x="691.3" y="680" width="1.5" height="14" fill="#0000ff"/>
<rect x="801.8" y="680" width="1.5" height="14" fill="#0000ff"/>
<rect x="855.3" y="681" width="1.5" height="13" fill="#0000ff"/>
<rect x="965.3" y="671" width="1.5" height="23" fill="#0000ff"/>
<rect x="1001.8" y="680" width="1.5" height="14" fill="#0000ff"/>
<rect x="1029.3" y="676" width="1.5" height="18" fill="#0000ff"/>
<rect x="619.3" y="686" width="1.5" height="8" fill="#0000ff"/>
<rect x="744.3" y="687" width="1.5" height="7" fill="#0000ff"/>
<rect x="398.7" y="676" width="157.3" height="30" fill="#9b0000"/>
<path d="M399.5,683 H555.5" fill="none" stroke="#2a0a9a" stroke-width="1" opacity="0.85"/>
<path d="M399.5,742 V683 M555.5,683 V742" fill="none" stroke="#2a0a9a" stroke-width="1" opacity="0.3"/>
<line x1="402" y1="693.2" x2="556" y2="693.2" stroke="#7f96d2" stroke-width="2" stroke-dasharray="5,5"/>
<line x1="83" y1="693.2" x2="114" y2="693.2" stroke="#5a6fe0" stroke-width="2" stroke-dasharray="5,3"/>
<rect x="145.6" y="434.5" width="2.8" height="307.5" fill="#14c814"/>
<rect x="239.45" y="456" width="2.1" height="286" fill="#14c814"/>
<rect x="333.95" y="456" width="2.1" height="286" fill="#14c814"/>
<rect x="958.5" y="436" width="1.3" height="306" fill="#22e022"/>
<path d="M81.5,743 V387.5 H1031" fill="none" stroke="#b4b4b4" stroke-width="2.4"/>
<path d="M81.5,742.6 H1031.2 V387.5" fill="none" stroke="#b4b4b4" stroke-width="2"/>
<text transform="translate(150,434.5) rotate(-90)" class="gl">mic - 3</text>
<text transform="translate(243.8,455.8) rotate(-90)" class="gl">[L] mic - 1</text>
<text transform="translate(338.3,455.8) rotate(-90)" class="gl">[L] mic - 5</text>
<text transform="translate(962,435) rotate(-90)" class="gl2">mic - 4</text>
<text transform="translate(107.8,556.5) rotate(-90)" class="rl">Exclusion 500-510 MHz</text>
<text x="75.5" y="393.1" class="yl" text-anchor="end">-12.5</text>
<text x="75.5" y="428.7" class="yl" text-anchor="end">-23.3</text>
<text x="75.5" y="464.2" class="yl" text-anchor="end">-34.0</text>
<text x="75.5" y="499.7" class="yl" text-anchor="end">-44.8</text>
<text x="75.5" y="535.2" class="yl" text-anchor="end">-55.5</text>
<text x="75.5" y="570.8" class="yl" text-anchor="end">-66.3</text>
<text x="75.5" y="606.3" class="yl" text-anchor="end">-77.0</text>
<text x="75.5" y="641.8" class="yl" text-anchor="end">-87.8</text>
<text x="75.5" y="677.4" class="yl" text-anchor="end">-98.5</text>
<text x="75.5" y="712.9" class="yl" text-anchor="end">-109.3</text>
<text x="75.5" y="748.4" class="yl" text-anchor="end">-120.0</text>
<text x="81.5" y="764" class="yl" text-anchor="middle">500.000</text>
<text x="556.5" y="764" class="yl" text-anchor="middle">650.000 MHz</text>
<text x="1031" y="764" class="yl" text-anchor="middle">800.000</text>
</svg>
<div id="tbl">
<div class="hc" style="left:0px;width:30.5px">#</div>
<div class="hc" style="left:30.5px;width:226.0px">Device Name</div>
<div class="hc" style="left:256.5px;width:269.0px">Model</div>
<div class="hc" style="left:525.5px;width:194.5px">Band</div>
<div class="hc hsel" style="left:720px;width:166px">Frequency (MHz)</div>
<div class="hc" style="left:886px;width:92px">Locked</div>
<div class="hc" style="left:978px;width:50px">State</div>
<div class="row" style="top:36.3px;height:38.0px">
<div class="c" style="left:0px;width:30.5px">2</div>
<div class="c" style="left:30.5px;width:226.0px">mic - 3</div>
<div class="c" style="left:256.5px;width:269.0px">EW 500 G4</div>
<div class="c" style="left:525.5px;width:194.5px">AS</div>
<div class="c" style="left:720px;width:166px">520.550</div>
<div class="c lockc" style="left:886px;width:92px"><div class="lbtn">Unlocked</div></div>
<div class="c opt" style="left:978px;width:50px">OPT</div>
</div>
<div class="row" style="top:74.3px;height:37.60000000000001px">
<div class="c" style="left:0px;width:30.5px">3</div>
<div class="c" style="left:30.5px;width:226.0px">mic - 1</div>
<div class="c" style="left:256.5px;width:269.0px">Custom Model RFE</div>
<div class="c" style="left:525.5px;width:194.5px">Band 500-600 MHz</div>
<div class="c" style="left:720px;width:166px">550.000</div>
<div class="c lockc" style="left:886px;width:92px"><div class="lbtn">Locked</div></div>
<div class="c opt" style="left:978px;width:50px">OPT</div>
</div>
<div class="row sel" style="top:111.9px;height:37.599999999999994px">
<div class="c" style="left:0px;width:30.5px">4</div>
<div class="c" style="left:30.5px;width:226.0px">mic - 5</div>
<div class="c" style="left:256.5px;width:269.0px">Custom Model RFE</div>
<div class="c" style="left:525.5px;width:194.5px">Band 500-600 MHz</div>
<div class="c" style="left:720px;width:166px">580.000</div>
<div class="c lockc" style="left:886px;width:92px"><div class="lbtn">Locked</div></div>
<div class="c opt" style="left:978px;width:50px">OPT</div>
</div>
<div class="row" style="top:149.5px;height:37.599999999999994px">
<div class="c" style="left:0px;width:30.5px">5</div>
<div class="c" style="left:30.5px;width:226.0px">mic - 4</div>
<div class="c" style="left:256.5px;width:269.0px">ULXD4</div>
<div class="c" style="left:525.5px;width:194.5px">AS</div>
<div class="c" style="left:720px;width:166px">777.625</div>
<div class="c lockc" style="left:886px;width:92px"><div class="lbtn">Unlocked</div></div>
<div class="c opt" style="left:978px;width:50px">OPT</div>
</div>
<div class="row" style="top:187.1px;height:37.30000000000001px">
<div class="c" style="left:0px;width:30.5px">6</div>
<div class="c" style="left:30.5px;width:226.0px">mic - 6</div>
<div class="c" style="left:256.5px;width:269.0px">M3</div>
<div class="c" style="left:525.5px;width:194.5px">AS</div>
<div class="c" style="left:720px;width:166px">0.000</div>
<div class="c lockc" style="left:886px;width:92px"><div class="lbtn">Unlocked</div></div>
<div class="c nc" style="left:978px;width:50px">NC</div>
</div>
</div>
<div id="sbar"><div id="sthumb"></div>
<svg width="43" height="244" style="position:absolute;left:0;top:0"><path d="M16.5,15 L21.3,9.2 L26,15" fill="none" stroke="#5a5a5a" stroke-width="2.2"/><path d="M17,231.5 L21.2,236.5 L25.4,231.5" fill="none" stroke="#5a5a5a" stroke-width="2"/></svg></div>
<div id="thr"></div><svg width="1280" height="800" viewBox="0 0 1280 800" style="position:absolute;left:0;top:0;pointer-events:none" fill="#ffffff"><polygon points="57.07,298.65 67.41,298.65 67.18,301.15 56.83,301.15"/><polygon points="72.90,289.15 74.03,290.40 73.29,298.35 71.93,299.60 70.79,298.35 71.53,290.40"/><polygon points="71.87,300.20 73.01,301.45 72.27,309.40 70.90,310.65 69.77,309.40 70.51,301.45"/><polygon points="77.54,289.75 78.91,288.50 86.71,288.50 87.84,289.75 86.48,291.00 78.68,291.00"/><polygon points="88.11,290.05 89.25,291.30 88.59,298.35 87.23,299.60 86.09,298.35 86.75,291.30"/><polygon points="87.17,300.20 88.31,301.45 87.65,308.50 86.29,309.75 85.15,308.50 85.81,301.45"/><polygon points="75.66,310.05 77.02,308.80 84.82,308.80 85.96,310.05 84.59,311.30 76.79,311.30"/><polygon points="76.27,300.20 77.41,301.45 76.75,308.50 75.39,309.75 74.25,308.50 74.91,301.45"/><polygon points="77.21,290.05 78.35,291.30 77.69,298.35 76.33,299.60 75.19,298.35 75.85,291.30"/><polygon points="93.99,289.75 95.36,288.50 103.16,288.50 104.29,289.75 102.93,291.00 95.13,291.00"/><polygon points="93.66,290.05 94.80,291.30 94.14,298.35 92.78,299.60 91.64,298.35 92.30,291.30"/><polygon points="93.05,299.90 94.42,298.65 102.22,298.65 103.35,299.90 101.98,301.15 94.18,301.15"/><polygon points="103.62,300.20 104.76,301.45 104.10,308.50 102.74,309.75 101.60,308.50 102.26,301.45"/><polygon points="92.11,310.05 93.47,308.80 101.27,308.80 102.41,310.05 101.04,311.30 93.24,311.30"/></svg>
<div id="thrl">Threshold (dBm)</div>
<div id="sline"></div><div id="sknob"></div>
<div class="gbtn" style="left:926px;width:116.5px">Calculate</div>
<div class="gbtn" style="left:1045px;width:40px">i</div>
<div id="side">
<div class="sbtn" style="top:1.60px"><span class="lbl">Display</span></div>
<div class="sbtn" style="top:65.35px"><span class="lbl">Device</span></div>
<div class="sbtn" style="top:129.10px"><span class="lbl">CSV File</span></div>
<div class="sbtn small" style="top:192.85px"><span class="lbl">Radio Standard</span></div>
<div class="sbtn" style="top:256.60px"><span class="lbl">Project</span><span class="fc">FC</span></div>
<div class="sbtn" style="top:320.35px"><span class="lbl">Inventory</span><span class="fc">FC</span></div>
<div class="sbtn" style="top:384.10px"><span class="lbl">Analyze</span><span class="fc">FC</span></div>
<div class="sbtn" style="top:447.85px"><span class="lbl">Report</span><span class="fc">FC</span></div>
<div class="sbtn" style="top:511.60px"><span class="lbl">Advanced</span></div>
<div class="sbtn" style="top:575.35px"><span class="lbl">About</span></div>
<div class="sbtn" style="top:639.10px"><span class="lbl">HELP</span></div>
<div class="sbtn" style="top:702.85px"><span class="lbl">Back</span></div>
</div>
<div id="dlg"></div>
<div id="dt">Locked Frequency (MHz)</div>
<div id="dr">Range:500.000-800.000MHz</div>
<div id="inp"></div><svg width="1280" height="800" viewBox="0 0 1280 800" style="position:absolute;left:0;top:0;pointer-events:none" fill="#080808"><polygon points="526.93,261.22 534.88,261.22 535.60,262.02 535.55,262.58 534.67,263.38 526.72,263.38 526.00,262.58 526.05,262.02"/><polygon points="525.91,263.53 528.46,263.53 527.99,268.62 525.44,268.62"/><polygon points="526.23,268.77 534.18,268.77 534.90,269.57 534.85,270.13 533.97,270.93 526.02,270.93 525.30,270.13 525.35,269.57"/><polygon points="532.21,271.08 534.76,271.08 534.29,276.17 531.74,276.17"/><polygon points="525.53,276.32 533.48,276.32 534.20,277.12 534.15,277.68 533.27,278.48 525.32,278.48 524.60,277.68 524.65,277.12"/><polygon points="539.23,261.22 547.18,261.22 547.90,262.02 547.85,262.58 546.97,263.38 539.02,263.38 538.30,262.58 538.35,262.02"/><polygon points="545.21,263.53 547.76,263.53 547.29,268.62 544.74,268.62"/><polygon points="544.51,271.08 547.06,271.08 546.59,276.17 544.04,276.17"/><polygon points="537.83,276.32 545.78,276.32 546.50,277.12 546.45,277.68 545.57,278.48 537.62,278.48 536.90,277.68 536.95,277.12"/><polygon points="537.51,271.08 540.06,271.08 539.59,276.17 537.04,276.17"/><polygon points="538.21,263.53 540.76,263.53 540.29,268.62 537.74,268.62"/><polygon points="538.53,268.77 546.48,268.77 547.20,269.57 547.15,270.13 546.27,270.93 538.32,270.93 537.60,270.13 537.65,269.57"/><polygon points="551.53,261.22 559.48,261.22 560.20,262.02 560.15,262.58 559.27,263.38 551.32,263.38 550.60,262.58 550.65,262.02"/><polygon points="557.51,263.53 560.06,263.53 559.49,269.65 556.94,269.65"/><polygon points="556.91,270.05 559.46,270.05 558.89,276.17 556.34,276.17"/><polygon points="550.13,276.32 558.08,276.32 558.80,277.12 558.75,277.68 557.87,278.48 549.92,278.48 549.20,277.68 549.25,277.12"/><polygon points="549.91,270.05 552.46,270.05 551.89,276.17 549.34,276.17"/><polygon points="550.51,263.53 553.06,263.53 552.49,269.65 549.94,269.65"/><rect x="561.80" y="276.13" width="2.55" height="2.55"/><polygon points="567.73,261.22 575.68,261.22 576.40,262.02 576.35,262.58 575.47,263.38 567.52,263.38 566.80,262.58 566.85,262.02"/><polygon points="573.71,263.53 576.26,263.53 575.69,269.65 573.14,269.65"/><polygon points="573.11,270.05 575.66,270.05 575.09,276.17 572.54,276.17"/><polygon points="566.33,276.32 574.28,276.32 575.00,277.12 574.95,277.68 574.07,278.48 566.12,278.48 565.40,277.68 565.45,277.12"/><polygon points="566.11,270.05 568.66,270.05 568.09,276.17 565.54,276.17"/><polygon points="566.71,263.53 569.26,263.53 568.69,269.65 566.14,269.65"/><polygon points="580.03,261.22 587.98,261.22 588.70,262.02 588.65,262.58 587.77,263.38 579.82,263.38 579.10,262.58 579.15,262.02"/><polygon points="586.01,263.53 588.56,263.53 587.99,269.65 585.44,269.65"/><polygon points="585.41,270.05 587.96,270.05 587.39,276.17 584.84,276.17"/><polygon points="578.63,276.32 586.58,276.32 587.30,277.12 587.25,277.68 586.37,278.48 578.42,278.48 577.70,277.68 577.75,277.12"/><polygon points="578.41,270.05 580.96,270.05 580.39,276.17 577.84,276.17"/><polygon points="579.01,263.53 581.56,263.53 580.99,269.65 578.44,269.65"/><polygon points="592.33,261.22 600.28,261.22 601.00,262.02 600.95,262.58 600.07,263.38 592.12,263.38 591.40,262.58 591.45,262.02"/><polygon points="598.31,263.53 600.86,263.53 600.29,269.65 597.74,269.65"/><polygon points="597.71,270.05 600.26,270.05 599.69,276.17 597.14,276.17"/><polygon points="590.93,276.32 598.88,276.32 599.60,277.12 599.55,277.68 598.67,278.48 590.72,278.48 590.00,277.68 590.05,277.12"/><polygon points="590.71,270.05 593.26,270.05 592.69,276.17 590.14,276.17"/><polygon points="591.31,263.53 593.86,263.53 593.29,269.65 590.74,269.65"/></svg><div id="caret"></div>
<div class="kb " style="left:491.8px;top:306.8px;width:65px;height:66.6px">7</div>
<div class="kb " style="left:567px;top:306.8px;width:65px;height:66.6px">8</div>
<div class="kb " style="left:642px;top:306.8px;width:65px;height:66.6px">9</div>
<div class="kb " style="left:491.8px;top:384.2px;width:65px;height:66.6px">4</div>
<div class="kb " style="left:567px;top:384.2px;width:65px;height:66.6px">5</div>
<div class="kb " style="left:642px;top:384.2px;width:65px;height:66.6px">6</div>
<div class="kb " style="left:491.8px;top:461.6px;width:65px;height:66.6px">1</div>
<div class="kb " style="left:567px;top:461.6px;width:65px;height:66.6px">2</div>
<div class="kb " style="left:642px;top:461.6px;width:65px;height:66.6px">3</div>
<div class="kb " style="left:491.8px;top:539.2px;width:65px;height:66.6px">.</div>
<div class="kb " style="left:567px;top:539.2px;width:65px;height:66.6px">0</div>
<div class="kb " style="left:642px;top:539.2px;width:65px;height:66.6px">-</div>
<div class="kb unit" style="left:731px;top:306.8px;width:65px;height:66.6px">GHz</div>
<div class="kb unit" style="left:731px;top:384.2px;width:65px;height:66.6px">MHz</div>
<div class="kb unit" style="left:731px;top:461.6px;width:65px;height:66.6px">KHz</div>
<div class="kb xb" style="left:747.7px;top:194.6px;width:47.6px;height:46.8px">X</div>
<div class="kb sm" style="left:642px;top:253px;width:65px;height:35px">&lt;Del</div>
<div class="kb sm" style="left:731px;top:253px;width:65px;height:35px">Clear</div>
</div></body></html>
